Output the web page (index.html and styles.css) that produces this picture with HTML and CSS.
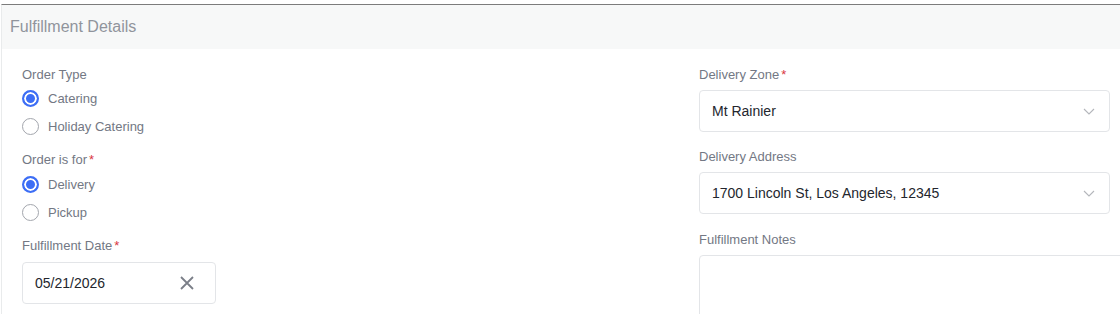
FILE: index.html
```html
<!DOCTYPE html>
<html>
<head>
<meta charset="utf-8">
<link rel="stylesheet" href="styles.css">
</head>
<body>
<section class="card">
  <header class="card-head">Fulfillment Details</header>
  <div class="card-body">
    <div class="col col-left">
      <div class="field">
        <div class="label">Order Type</div>
        <div class="radios">
          <div class="radio checked"><span class="dot"></span><span>Catering</span></div>
          <div class="radio"><span class="dot"></span><span>Holiday Catering</span></div>
        </div>
      </div>
      <div class="field field-for">
        <div class="label">Order is for<span class="req">*</span></div>
        <div class="radios">
          <div class="radio checked"><span class="dot"></span><span>Delivery</span></div>
          <div class="radio"><span class="dot"></span><span>Pickup</span></div>
        </div>
      </div>
      <div class="field field-date">
        <div class="label">Fulfillment Date<span class="req">*</span></div>
        <div class="input date">
          <span class="value">05/21/2026</span>
          <svg class="clear" width="16" height="16" viewBox="0 0 16 16"><path d="M2 2L14 14M14 2L2 14" stroke="#7b7f88" stroke-width="1.8" fill="none"/></svg>
        </div>
      </div>
    </div>
    <div class="col col-right">
      <div class="field">
        <div class="label">Delivery Zone<span class="req">*</span></div>
        <div class="input select">
          <span class="value">Mt Rainier</span>
          <svg class="chev" width="12" height="7" viewBox="0 0 12 7"><path d="M1 1L6 6L11 1" stroke="#b4b6bb" stroke-width="1.1" fill="none"/></svg>
        </div>
      </div>
      <div class="field">
        <div class="label">Delivery Address</div>
        <div class="input select">
          <span class="value">1700 Lincoln St, Los Angeles, 12345</span>
          <svg class="chev" width="12" height="7" viewBox="0 0 12 7"><path d="M1 1L6 6L11 1" stroke="#b4b6bb" stroke-width="1.1" fill="none"/></svg>
        </div>
      </div>
      <div class="field field-notes">
        <div class="label">Fulfillment Notes</div>
        <div class="textarea"></div>
      </div>
    </div>
  </div>
</section>
</body>
</html>
```

FILE: styles.css
```css
html, body {
  margin: 0;
  padding: 0;
  background: #ffffff;
  overflow: hidden;
}
body {
  font-family: "Liberation Sans", Arial, sans-serif;
  width: 1120px;
  height: 314px;
}
.card {
  margin: 4px 0 0 1px;
  border-top: 1px solid #7c7c7c;
  border-left: 1px solid #e9ebec;
  width: 1400px;
}
.card-head {
  background: #f7f8f8;
  height: 44px;
  line-height: 44px;
  padding-left: 8px;
  font-size: 16px;
  color: #90949c;
}
.card-body {
  display: flex;
  padding: 18px 0 0 20px;
}
.col {
  display: flex;
  flex-direction: column;
}
.col-left {
  width: 677px;
}
.col-right {
  width: 410px;
}
.field {
  display: flex;
  flex-direction: column;
}
.label {
  font-size: 13px;
  line-height: 16px;
  color: #737884;
}
.req {
  color: #d9363e;
  margin-left: 2px;
}
.col-left .field + .field {
  margin-top: 12px;
}
.col-right .field + .field {
  margin-top: 17px;
}
.col-right .field + .field-notes {
  margin-top: 18px;
}
.radios {
  display: flex;
  flex-direction: column;
  margin-top: 1px;
}
.field-for .radios {
  margin-top: 2px;
}
.radio {
  display: flex;
  align-items: center;
  height: 28px;
  font-size: 13px;
  color: #737884;
}
.dot {
  box-sizing: border-box;
  width: 17px;
  height: 17px;
  border: 1px solid #a3a6ad;
  border-radius: 50%;
  margin-right: 9px;
  background: #fff;
}
.radio.checked .dot {
  border: 2px solid #3d6ef5;
  background: #3d6ef5;
  box-shadow: inset 0 0 0 2px #fff;
}
.input {
  box-sizing: border-box;
  height: 42px;
  border: 1px solid #e3e5e8;
  border-radius: 4px;
  display: flex;
  align-items: center;
  justify-content: space-between;
  padding: 0 13px 0 12px;
  font-size: 14px;
  color: #23262d;
  background: #fff;
}
.col-left .input {
  margin-top: 8px;
}
.col-right .input, .textarea {
  margin-top: 7px;
}
.date {
  width: 194px;
  padding-right: 20px;
}
.select {
  width: 411px;
  padding-right: 14px;
}
.textarea {
  box-sizing: border-box;
  width: 460px;
  height: 90px;
  border: 1px solid #e3e5e8;
  border-radius: 4px;
}
```
